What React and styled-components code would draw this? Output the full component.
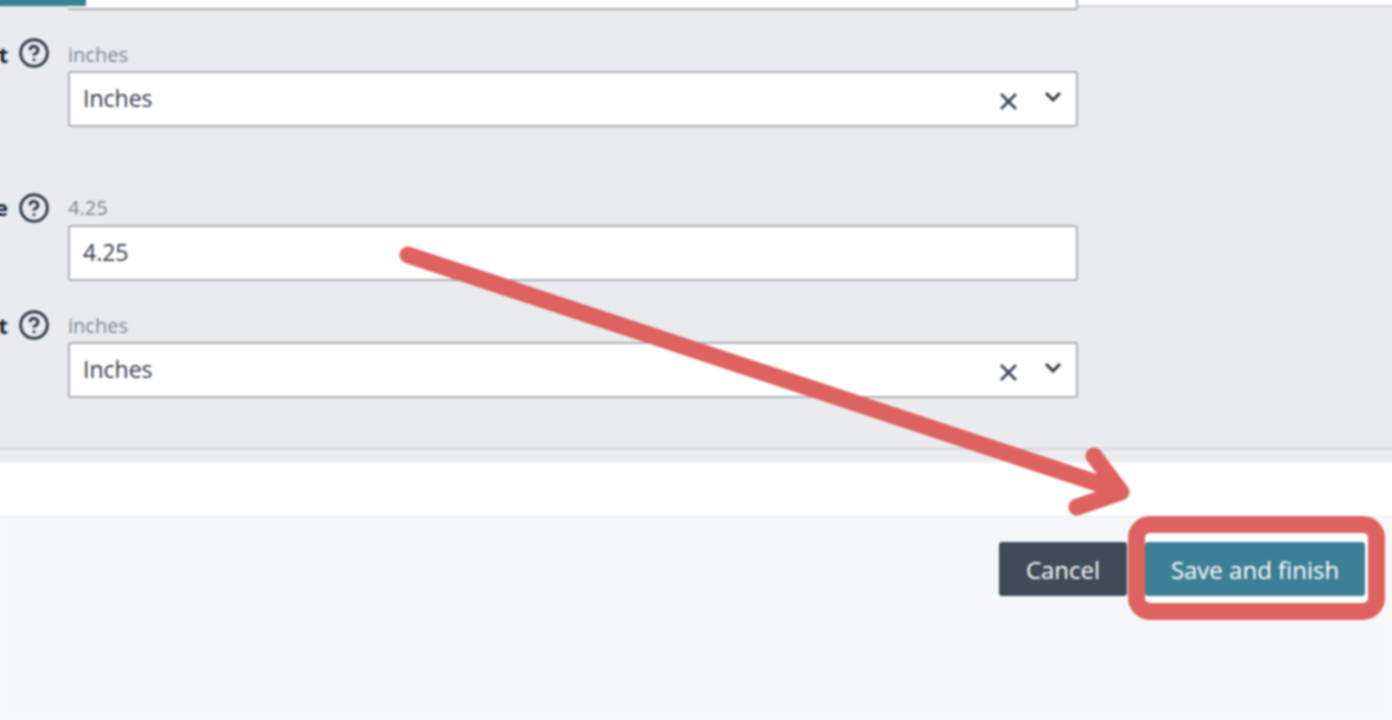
import React from "react";
import styled, { createGlobalStyle } from "styled-components";
import { CircleHelp } from "lucide-react";

const GlobalStyle = createGlobalStyle`
  html, body {
    margin: 0;
    padding: 0;
    background: #ffffff;
  }
  * {
    box-sizing: border-box;
  }
`;

const Page = styled.div`
  position: relative;
  width: 1392px;
  height: 720px;
  overflow: hidden;
  display: flex;
  flex-direction: column;
  font-family: "Open Sans", "Noto Sans", sans-serif;
  color: #323c4b;
  background: #ffffff;
`;

// the screenshot is a soft upscale, this softens everything under it
const SoftFocus = styled.div`
  position: absolute;
  inset: 0;
  pointer-events: none;
  backdrop-filter: blur(0.9px);
`;

const Panel = styled.section`
  height: 462px;
  display: flex;
  flex-direction: column;
  background: #e9ebed;
`;

const TopStrip = styled.div`
  height: 43px;
  position: relative;
  background: linear-gradient(#ffffff 0 5px, #d3d6d9 5px 7px, transparent 7px);
`;

const TopInput = styled.div`
  width: 1010px;
  height: 10px;
  margin-left: 68px;
  background: #ffffff;
  border-bottom: 2px solid #a9b0b8;
  border-right: 2px solid #a9b0b8;
  border-bottom-right-radius: 3px;
`;

const TopButton = styled.div`
  position: absolute;
  left: 0;
  top: 0;
  width: 86px;
  height: 6px;
  background: #3d8095;
`;

const Row = styled.div`
  display: grid;
  grid-template-columns: 8px 29px 1010px;
  column-gap: 11px;
  margin-top: ${(p) => p.$gap || 0}px;
`;

const Label = styled.div`
  display: flex;
  justify-content: flex-end;
  overflow: hidden;
  height: 24px;
  font-size: 21px;
  line-height: 24px;
  font-weight: 700;
  color: #16232f;
  white-space: nowrap;
`;

const Help = styled.div`
  height: 29px;
  width: 29px;
  margin-top: ${(p) => p.$top}px;
  display: flex;
  align-items: center;
  justify-content: center;
  color: #2f3b4a;

  svg {
    flex: none;
  }
`;

const Field = styled.div`
  width: 1010px;
  display: flex;
  flex-direction: column;
  margin-left: 9px;
  gap: ${(p) => p.$gap}px;
`;

const Hint = styled.div`
  height: 24px;
  font-size: 20px;
  line-height: 24px;
  color: #7c8794;
`;

const Control = styled.div`
  height: 56px;
  display: flex;
  align-items: center;
  padding: 0 14px;
  background: #ffffff;
  border: 2px solid #aab1b9;
  border-radius: 3px;
  font-size: 23px;
  font-weight: 500;
  color: #323c4b;
`;

const Value = styled.span`
  flex: 1;
  margin-top: -2px;
  margin-left: -1px;
`;

const ClearIcon = styled.svg`
  width: 19px;
  height: 17px;
  margin-top: 4px;
  margin-right: 26px;
`;

const ChevronIcon = styled.svg`
  width: 18px;
  height: 11px;
  margin-top: -5px;
`;

const PanelEdge = styled.div`
  height: 2px;
  margin-top: 50px;
  background: #d5d8db;
`;

const WhiteBand = styled.div`
  height: 55px;
  background: #ffffff;
  border-bottom: 1px solid #e6e9ea;
`;

const Footer = styled.footer`
  flex: 1;
  display: flex;
  justify-content: flex-end;
  align-items: flex-start;
  gap: 1px;
  padding-right: 7px;
  background: #f5f8f9;
`;

const Button = styled.div`
  height: 54px;
  display: flex;
  align-items: center;
  justify-content: center;
  border-radius: 3px;
  color: #ffffff;
  font-size: 24px;
  font-weight: 500;
  background: ${(p) => (p.$primary ? "#3d8095" : "#414a59")};
  width: ${(p) => p.$width}px;
`;

const CancelWrap = styled.div`
  margin-top: 25px;
`;

const HighlightFrame = styled.div`
  width: 257px;
  height: 104px;
  margin-top: -1px;
  padding: 9px 3px 0 0;
  background: #ffffff;
  border: 17px solid #de6360;
  border-radius: 22px;
`;

const Arrow = styled.svg`
  position: absolute;
  left: 0;
  top: 0;
  width: 1392px;
  height: 720px;
  pointer-events: none;
`;

const SelectField = ({ hint, label, helpTop }) => (
  <>
    <Label>{label}</Label>
    <Help $top={helpTop}>
      <CircleHelp size={32} strokeWidth={2.2} />
    </Help>
    <Field $gap={4}>
      <Hint>{hint}</Hint>
      <Control>
        <Value>Inches</Value>
        <ClearIcon viewBox="0 0 19 17">
          <path d="M2 1l15 15M17 1L2 16" stroke="#3a4656" strokeWidth="2.8" fill="none" />
        </ClearIcon>
        <ChevronIcon viewBox="0 0 18 11">
          <path d="M2 2l7 7 7-7" stroke="#2f3b4a" strokeWidth="3" fill="none" />
        </ChevronIcon>
      </Control>
    </Field>
  </>
);

export default function App() {
  return (
    <>
      <GlobalStyle />
      <Page>
        <Panel>
          <TopStrip>
            <TopInput />
            <TopButton />
          </TopStrip>
          <Row>
            <SelectField label="Length unit" hint="inches" helpTop={-5} />
          </Row>
          <Row $gap={69}>
            <Label>Size</Label>
            <Help $top={-3}>
              <CircleHelp size={32} strokeWidth={2.2} />
            </Help>
            <Field $gap={5}>
              <Hint>4.25</Hint>
              <Control>
                <Value>4.25</Value>
              </Control>
            </Field>
          </Row>
          <Row $gap={33}>
            <SelectField label="Width unit" hint="inches" helpTop={-4} />
          </Row>
          <PanelEdge />
        </Panel>
        <WhiteBand />
        <Footer>
          <CancelWrap>
            <Button $width={128}>Cancel</Button>
          </CancelWrap>
          <HighlightFrame>
            <Button $primary $width={220}>Save and finish</Button>
          </HighlightFrame>
        </Footer>
        <Arrow viewBox="0 0 1392 720">
          <path
            d="M408 255L1118 490M1094 456L1121 492L1077 507"
            stroke="#de6360"
            strokeWidth="17"
            strokeLinecap="round"
            strokeLinejoin="round"
            fill="none"
          />
        </Arrow>
        <SoftFocus />
      </Page>
    </>
  );
}
